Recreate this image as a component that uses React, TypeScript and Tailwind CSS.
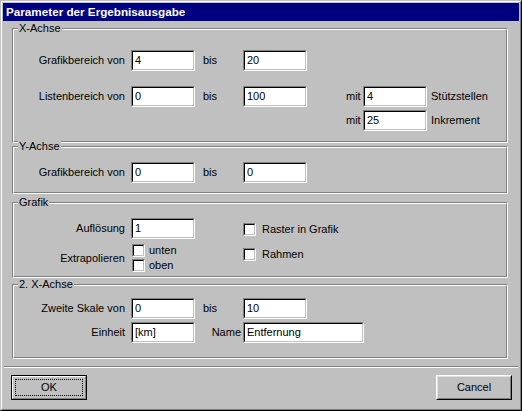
import React from "react";

const font = { fontFamily: '"Liberation Sans", Arial, sans-serif' };

function Field({ value, w = "w-[64px]" }: { value: string; w?: string }) {
  return (
    <div
      className={`${w} h-[21px] shrink-0 border border-t-[#808080] border-l-[#808080] border-b-white border-r-white`}
    >
      <div className="h-full border border-t-black border-l-black border-b-[#c0c0c0] border-r-[#c0c0c0] bg-white pl-[2px] flex items-center leading-none text-black">
        {value}
      </div>
    </div>
  );
}

function Check() {
  return (
    <div className="w-[13px] h-[13px] shrink-0 border border-t-[#808080] border-l-[#808080] border-b-white border-r-white">
      <div className="h-full border border-t-black border-l-black border-b-[#c0c0c0] border-r-[#c0c0c0] bg-white" />
    </div>
  );
}

function Group({
  title,
  h,
  mt,
  children,
}: {
  title: string;
  h: string;
  mt: string;
  children: React.ReactNode;
}) {
  return (
    <div
      className={`relative w-[496px] ${h} ${mt} border border-t-[#808080] border-l-[#808080] border-b-white border-r-white`}
    >
      <div className="h-full border border-t-white border-l-white border-b-[#808080] border-r-[#808080] flex flex-col">
        {children}
      </div>
      <span className="absolute left-[5px] top-[-7px] bg-[#c0c0c0] px-[1px] leading-[13px]">
        {title}
      </span>
    </div>
  );
}

function Label({ text }: { text: string }) {
  return <div className="w-[111px] shrink-0 text-right mr-[6px] leading-[13px]">{text}</div>;
}

function Bis({ text = "bis", right = false }: { text?: string; right?: boolean }) {
  return (
    <div
      className={`w-[40px] ml-[8px] shrink-0 leading-[13px] ${right ? "text-right pr-[2px]" : ""}`}
    >
      {text}
    </div>
  );
}

export default function App() {
  return (
    <div
      className="w-[522px] h-[411px] bg-[#c0c0c0] text-[11px] text-black border border-t-[#c0c0c0] border-l-[#c0c0c0] border-b-black border-r-black"
      style={font}
    >
      <div className="h-full border border-t-white border-l-white border-b-[#808080] border-r-[#808080] p-[1px] flex flex-col">
        {/* Title bar */}
        <div className="h-[18px] shrink-0 bg-[#000080] text-white font-bold text-[11.7px] pl-[3px] flex items-center">
          Parameter der Ergebnisausgabe
        </div>

        {/* Body */}
        <div className="flex flex-col pl-[9px]">
          <Group title="X-Achse" h="h-[115px]" mt="mt-[7px]">
            <div className="flex items-center mt-[20px]">
              <Label text="Grafikbereich von" />
              <Field value="4" />
              <Bis />
              <Field value="20" />
            </div>
            <div className="flex items-center mt-[15px]">
              <Label text="Listenbereich von" />
              <Field value="0" />
              <Bis />
              <Field value="100" />
              <div className="ml-[39px] w-[17px] shrink-0 leading-[13px]">mit</div>
              <Field value="4" />
              <div className="ml-[4px] leading-[13px]">Stützstellen</div>
            </div>
            <div className="flex items-center mt-[3px] pl-[332px]">
              <div className="w-[17px] shrink-0 leading-[13px]">mit</div>
              <Field value="25" />
              <div className="ml-[4px] leading-[13px]">Inkrement</div>
            </div>
          </Group>

          <Group title="Y-Achse" h="h-[48px]" mt="mt-[3px]">
            <div className="flex items-center mt-[14px]">
              <Label text="Grafikbereich von" />
              <Field value="0" />
              <Bis />
              <Field value="0" />
            </div>
          </Group>

          <Group title="Grafik" h="h-[76px]" mt="mt-[8px]">
            <div className="flex">
              <div className="flex flex-col">
                <div className="flex items-center mt-[14px]">
                  <Label text="Auflösung" />
                  <Field value="1" />
                </div>
                <div className="flex items-center mt-[5px]">
                  <div className="w-[111px] shrink-0 text-right leading-[13px]">Extrapolieren</div>
                  <div className="ml-[7px] flex flex-col gap-[2px]">
                    <div className="flex items-center">
                      <Check />
                      <span className="ml-[4px] leading-[13px]">unten</span>
                    </div>
                    <div className="flex items-center">
                      <Check />
                      <span className="ml-[4px] leading-[13px]">oben</span>
                    </div>
                  </div>
                </div>
              </div>
              <div className="ml-[48px] flex flex-col">
                <div className="flex items-center mt-[19px]">
                  <Check />
                  <span className="ml-[6px] leading-[13px]">Raster in Grafik</span>
                </div>
                <div className="flex items-center mt-[12px]">
                  <Check />
                  <span className="ml-[6px] leading-[13px]">Rahmen</span>
                </div>
              </div>
            </div>
          </Group>

          <Group title="2. X-Achse" h="h-[75px]" mt="mt-[6px]">
            <div className="flex items-center mt-[12px]">
              <Label text="Zweite Skale von" />
              <Field value="0" />
              <Bis />
              <Field value="10" />
            </div>
            <div className="flex items-center mt-[3px]">
              <Label text="Einheit" />
              <Field value="[km]" />
              <Bis text="Name" right />
              <Field value="Entfernung" w="w-[121px]" />
            </div>
          </Group>
        </div>

        {/* Separator */}
        <div className="mt-[7px] mx-[1px] h-[2px] shrink-0 border-t border-t-[#808080] border-b border-b-white" />

        {/* Buttons */}
        <div className="flex justify-between pl-[8px] pr-[7px] mt-[7px]">
          <div className="w-[76px] h-[25px] border border-black">
            <div className="h-full border border-t-white border-l-white border-b-[#808080] border-r-[#808080] p-[2px]">
              <div className="h-full border border-dotted border-black flex items-center justify-center leading-none">
                OK
              </div>
            </div>
          </div>
          <div className="w-[76px] h-[25px] border border-t-white border-l-white border-b-black border-r-black">
            <div className="h-full border border-t-[#dfdfdf] border-l-[#dfdfdf] border-b-[#808080] border-r-[#808080] flex items-center justify-center leading-none">
              Cancel
            </div>
          </div>
        </div>
      </div>
    </div>
  );
}
